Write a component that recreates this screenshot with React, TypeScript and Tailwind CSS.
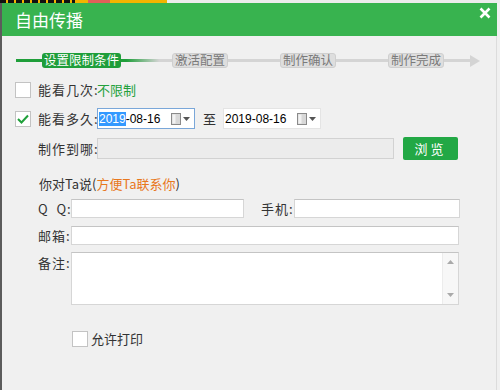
import React from "react";

const font = { fontFamily: '"Noto Sans CJK SC", "Noto Sans", sans-serif' };

function CalIcon() {
  return (
    <span className="flex items-center gap-[2px]">
      <svg width="10" height="12" viewBox="0 0 10 12">
        <rect x="0.5" y="0.5" width="9" height="11" fill="#d8d8d8" stroke="#8a8a8a" />
        <rect x="1.5" y="1.5" width="3" height="9" fill="#f2f2f2" />
      </svg>
      <svg width="7" height="4" viewBox="0 0 7 4">
        <path d="M0 0 L7 0 L3.5 4 Z" fill="#555" />
      </svg>
    </span>
  );
}

function DateBox({ focused }: { focused?: boolean }) {
  return (
    <div
      className={`flex h-[21px] w-[98px] items-center justify-between bg-white pl-[1px] pr-[4px] text-[12px] text-black ${
        focused ? "border border-[#7aa7d9]" : "border border-[#e4e4e4]"
      }`}
      style={{ fontFamily: '"Liberation Sans", Arial, sans-serif' }}
    >
      <span>
        {focused ? <span className="bg-[#3399ff] text-white">2019</span> : "2019"}-08-16
      </span>
      <CalIcon />
    </div>
  );
}

function Check({ checked, className = "" }: { checked?: boolean; className?: string }) {
  return (
    <div className={`flex h-[16px] w-[16px] items-center justify-center border border-[#c3c3c3] bg-white ${className}`}>
      {checked && (
        <svg width="12" height="10" viewBox="0 0 12 10">
          <path d="M1 5 L4.5 8.5 L11 1.5" fill="none" stroke="#1fa03a" strokeWidth="2" />
        </svg>
      )}
    </div>
  );
}

function Field({ className = "" }: { className?: string }) {
  return <div className={`h-[19px] border border-[#d6d6d6] border-t-[#c4c4c4] bg-white ${className}`} />;
}

export default function App() {
  return (
    <div className="relative h-[390px] w-[500px] overflow-hidden bg-[#f0f0f0] text-[13px] text-[#333]" style={font}>
      <div className="flex h-[3px]">
        <div className="w-[75px] bg-[repeating-linear-gradient(90deg,#111_0,#111_6px,#f2b400_6px,#f2b400_8px)]" />
        <div className="w-[13px] bg-[#f2b400]" />
        <div className="w-[22px] bg-[#e0605a]" />
        <div className="w-[57px] bg-[#f2b400]" />
        <div className="flex-1 bg-[#ececec]" />
      </div>
      <div className="mr-[3px] flex h-[33px] items-center justify-between border-l-2 border-[#5c5c5c] bg-[#38b34f] pl-[13px] pr-[6px]">
        <span className="text-[17px] text-white">自由传播</span>
        <svg width="12" height="12" viewBox="0 0 12 12" className="-mt-[14px]">
          <path d="M1.5 1.5 L10.5 10.5 M10.5 1.5 L1.5 10.5" stroke="white" strokeWidth="2.6" />
        </svg>
      </div>
      <div className="mr-[3px] h-[354px] border-l-2 border-r border-l-[#5c5c5c] border-r-[#dcdcdc]">
        <div className="flex h-[48px] items-center pl-[14px] pt-[1px] whitespace-nowrap">
          <div className="h-[3px] w-[26px] bg-[#1f9e3a]" />
          <div className="flex h-[15px] items-center rounded-[3px] bg-[#1f9e3a] px-[2px] text-[12.5px] text-white">设置限制条件</div>
          <div className="h-[3px] w-[51px] bg-[linear-gradient(90deg,#1f9e3a,#1f9e3a_10%,#d4d4d4_75%)]" />
          <div className="flex h-[15px] items-center rounded-[3px] border border-[#cfcfcf] bg-[#dedede] px-[2px] text-[12.5px] text-[#7a7a7a]">激活配置</div>
          <div className="h-[3px] w-[52px] bg-[#d4d4d4]" />
          <div className="flex h-[15px] items-center rounded-[3px] border border-[#cfcfcf] bg-[#dedede] px-[2px] text-[12.5px] text-[#7a7a7a]">制作确认</div>
          <div className="h-[3px] w-[52px] bg-[#d4d4d4]" />
          <div className="flex h-[15px] items-center rounded-[3px] border border-[#cfcfcf] bg-[#dedede] px-[2px] text-[12.5px] text-[#7a7a7a]">制作完成</div>
          <div className="h-[3px] w-[26px] bg-[#d4d4d4]" />
          <svg width="10" height="12" viewBox="0 0 10 12">
            <path d="M0 0 L10 6 L0 12 Z" fill="#d4d4d4" />
          </svg>
        </div>

        <div className="-mt-[2px] flex h-[16px] items-center pl-[13px] whitespace-nowrap">
          <Check />
          <span className="ml-[7px] w-[59px] tracking-[1px]">能看几次:</span>
          <span className="text-[#22a03c]">不限制</span>
        </div>

        <div className="mt-[10px] flex h-[21px] items-center pl-[13px] whitespace-nowrap">
          <Check checked />
          <span className="ml-[7px] w-[59px] tracking-[1px]">能看多久:</span>
          <DateBox focused />
          <span className="ml-[8px] mr-[7px]">至</span>
          <DateBox />
        </div>

        <div className="mt-[8px] flex h-[23px] items-center pl-[36px] whitespace-nowrap">
          <span className="w-[59px] tracking-[1px]">制作到哪:</span>
          <div className="h-[21px] w-[297px] border border-[#d2d2d2] bg-[#ececec]" />
          <div className="ml-[9px] flex h-[23px] w-[55px] items-center justify-center rounded-[2px] bg-[#22a845] text-[13px] tracking-[3px] text-white">
            浏览
          </div>
        </div>

        <div className="mt-[15px] pl-[37px] leading-[18px]">
          你对Ta说(<span className="text-[#e8781e]">方便Ta联系你</span>)
        </div>

        <div className="mt-[6px] flex h-[19px] items-center pl-[36px] whitespace-nowrap">
          <span className="w-[33px] tracking-[1px]">Q&nbsp;&nbsp;Q:</span>
          <Field className="w-[173px]" />
          <span className="ml-[17px] w-[33px] tracking-[1px]">手机:</span>
          <Field className="w-[166px]" />
        </div>

        <div className="mt-[8px] flex h-[19px] items-center pl-[36px] whitespace-nowrap">
          <span className="w-[33px] tracking-[1px]">邮箱:</span>
          <Field className="w-[388px]" />
        </div>

        <div className="mt-[7px] flex items-start pl-[36px] whitespace-nowrap">
          <span className="mt-[1px] w-[33px] tracking-[1px]">备注:</span>
          <div className="flex h-[53px] w-[388px] border border-[#d6d6d6] border-t-[#c4c4c4] bg-white">
            <div className="flex-1" />
            <div className="flex w-[16px] flex-col items-center justify-between border-l border-[#ececec] bg-[#f7f7f7] py-[7px]">
              <svg width="7" height="4" viewBox="0 0 7 4">
                <path d="M0 4 L7 4 L3.5 0 Z" fill="#aaa" />
              </svg>
              <svg width="7" height="4" viewBox="0 0 7 4">
                <path d="M0 0 L7 0 L3.5 4 Z" fill="#aaa" />
              </svg>
            </div>
          </div>
        </div>

        <div className="mt-[24px] flex items-center pl-[70px]">
          <Check />
          <span className="ml-[3px]">允许打印</span>
        </div>
      </div>
    </div>
  );
}
